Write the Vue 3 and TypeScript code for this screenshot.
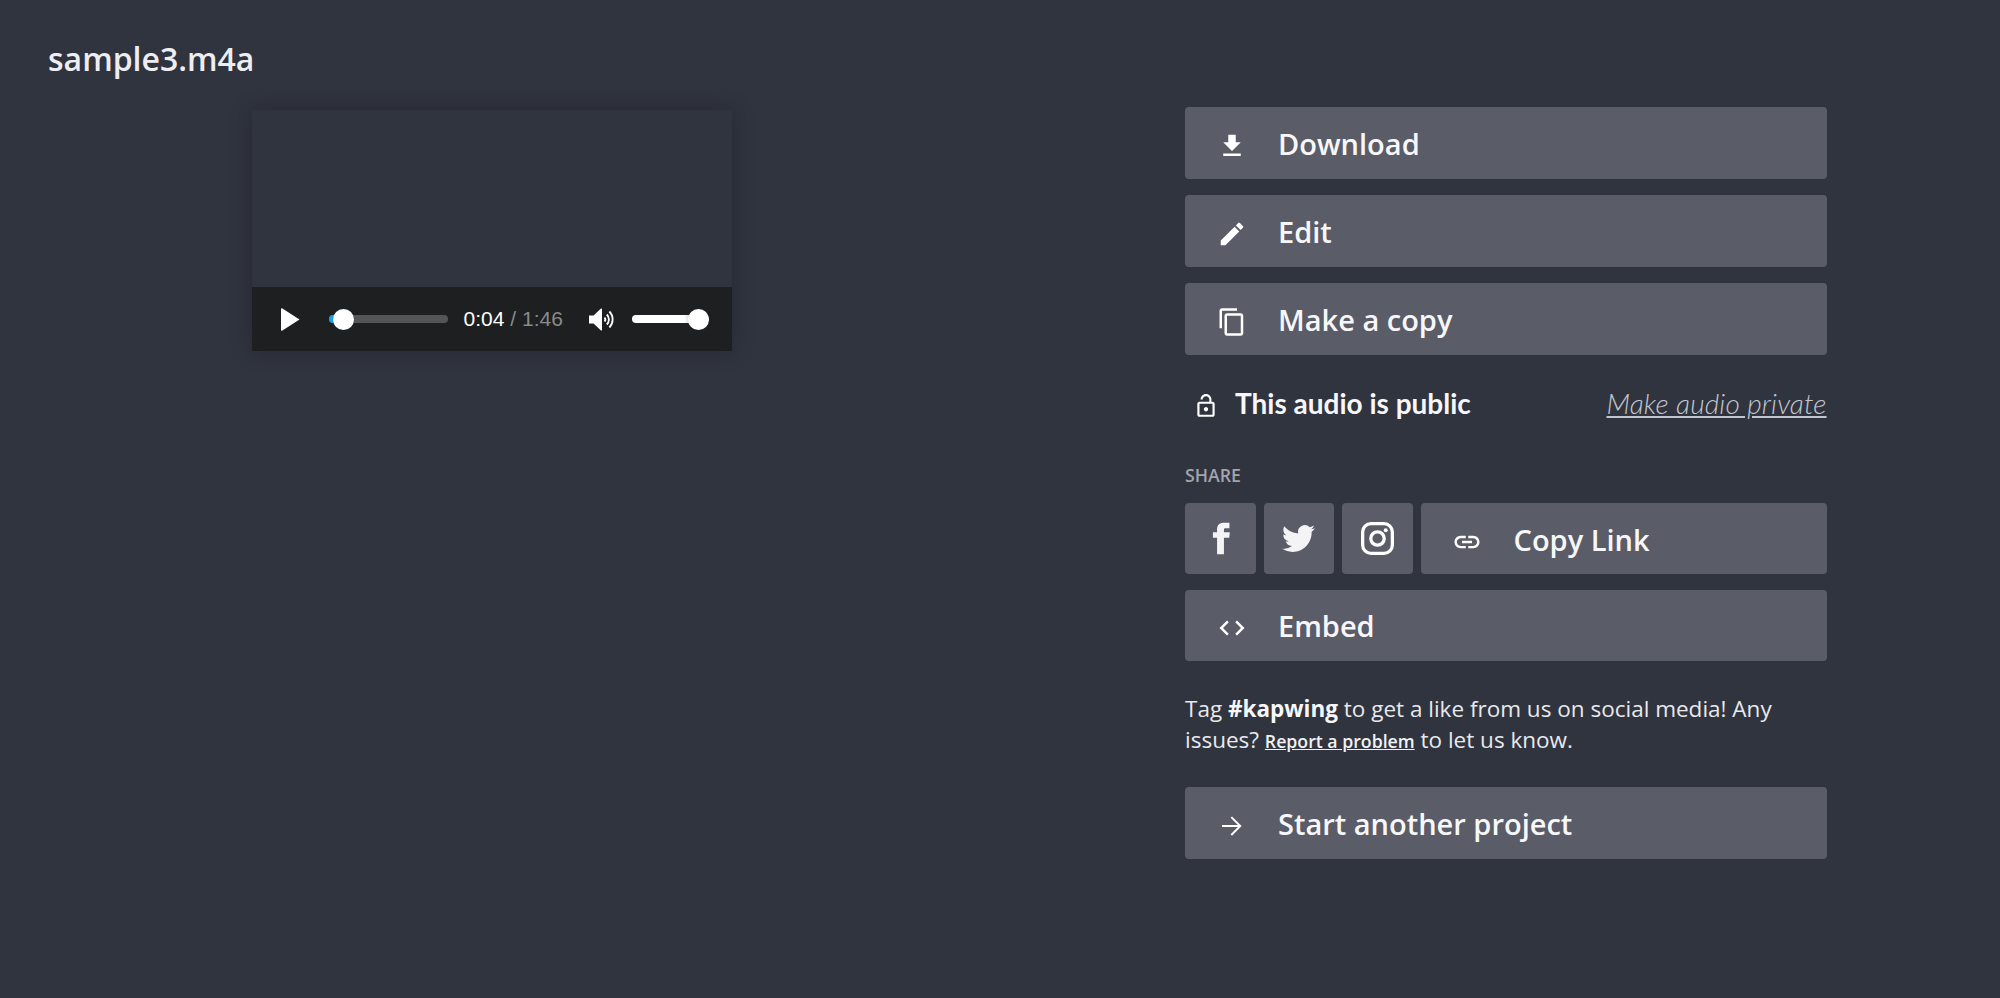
<template>
  <div class="page">
    <section class="left">
      <h1 class="title">sample3.m4a</h1>
      <div class="player">
        <div class="player-screen"></div>
        <div class="controls">
          <svg class="play" viewBox="0 0 20 24"><path d="M0 1.200c0-1 .7-1.400 1.500-.9L19.500 12 1.500 23.700c-.8.5-1.500.1-1.500-.9z" /></svg>
          <div class="timeline">
            <span class="timeline-fill"></span>
            <span class="thumb timeline-thumb"></span>
          </div>
          <div class="time">0:04<span class="time-rest"> / 1:46</span></div>
          <svg class="speaker" viewBox="0 0 26 23">
            <path class="solid" d="M0 7.500h4.500L12 .6c.5-.4 1-.2 1 .5v20.800c0 .7-.5.9-1 .5l-7.500-6.900H0z" />
            <path class="wave" d="M15.500 9.500a3 3 0 010 4M17.800 6.500a7 7 0 010 10M20.400 3.500a11.500 11.500 0 010 16" />
          </svg>
          <div class="volume">
            <span class="thumb volume-thumb"></span>
          </div>
        </div>
      </div>
    </section>

    <section class="right">
      <button v-for="item in topActions" :key="item.label" class="action">
        <span class="action-icon">
          <svg viewBox="0 0 24 24"><path :d="item.icon" /></svg>
        </span>
        {{ item.label }}
      </button>

      <div class="privacy">
        <div class="privacy-state">
          <svg viewBox="0 0 24 24"><path :d="icons.lock" /></svg>
          This audio is public
        </div>
        <a class="privacy-link">Make audio private</a>
      </div>

      <div class="share-label">SHARE</div>
      <div class="share-row">
        <button class="square">
          <svg class="fb" viewBox="0 0 24 24"><path :d="icons.facebook" /></svg>
        </button>
        <button class="square">
          <svg class="tw" viewBox="0 0 24 24"><path :d="icons.twitter" /></svg>
        </button>
        <button class="square">
          <svg class="ig" viewBox="0 0 32 32">
            <rect x="1.600" y="1.600" width="28.800" height="28.800" rx="8" />
            <circle cx="16" cy="16" r="6.500" />
            <circle class="dot" cx="24" cy="8" r="1.900" />
          </svg>
        </button>
        <button class="action copy-link">
          <span class="action-icon">
            <svg viewBox="0 0 24 24"><path :d="icons.link" /></svg>
          </span>
          Copy Link
        </button>
      </div>

      <button class="action embed">
        <span class="action-icon">
          <svg viewBox="0 0 24 24"><path :d="icons.code" /></svg>
        </span>
        Embed
      </button>

      <p class="note">
        Tag <b>#kapwing</b> to get a like from us on social media! Any issues?
        <a class="report">Report a problem</a> to let us know.
      </p>

      <button class="action">
        <span class="action-icon">
          <svg viewBox="0 0 24 24"><path :d="icons.arrow" /></svg>
        </span>
        Start another project
      </button>
    </section>
  </div>
</template>

<script setup lang="ts">
const icons = {
  download: 'M19 9h-4V3H9v6H5l7 7 7-7zM5 18v2h14v-2H5z',
  edit: 'M3 17.25V21h3.75L17.81 9.94l-3.75-3.75L3 17.25zM20.71 7.04c.39-.39.39-1.02 0-1.41l-2.34-2.34c-.39-.39-1.02-.39-1.41 0l-1.83 1.83 3.75 3.75 1.83-1.83z',
  copy: 'M16 1H4c-1.1 0-2 .9-2 2v14h2V3h12V1zm3 4H8c-1.1 0-2 .9-2 2v14c0 1.1.9 2 2 2h11c1.1 0 2-.9 2-2V7c0-1.1-.9-2-2-2zm0 16H8V7h11v14z',
  lock: 'M12 17c1.1 0 2-.9 2-2s-.9-2-2-2-2 .9-2 2 .9 2 2 2zm6-9h-1V6c0-2.76-2.24-5-5-5S7 3.24 7 6h1.900c0-1.710 1.390-3.100 3.100-3.100 1.710 0 3.100 1.390 3.100 3.100v2H6c-1.100 0-2 .9-2 2v10c0 1.100.9 2 2 2h12c1.100 0 2-.9 2-2V10c0-1.100-.9-2-2-2zm0 12H6V10h12v10z',
  link: 'M3.9 12c0-1.71 1.39-3.1 3.1-3.1h4V7H7c-2.76 0-5 2.24-5 5s2.24 5 5 5h4v-1.900H7c-1.710 0-3.100-1.390-3.100-3.100zM8 13h8v-2H8v2zm9-6h-4v1.900h4c1.710 0 3.100 1.390 3.100 3.100s-1.390 3.100-3.100 3.100h-4V17h4c2.760 0 5-2.240 5-5s-2.240-5-5-5z',
  code: 'M9.4 16.6L4.8 12l4.6-4.600L8 6l-6 6 6 6 1.400-1.400zm5.200 0l4.600-4.600-4.600-4.600L16 6l6 6-6 6-1.400-1.400z',
  arrow: 'M12 4.300l-1.100 1.100 5.800 5.800H4v1.600h12.700l-5.800 5.800 1.100 1.100 7.700-7.700z',
  facebook: 'M18.770 7.460H14.500v-1.900c0-.9.6-1.100 1-1.100h3V.5h-4.330C10.240.5 9.500 3.440 9.500 5.320v2.150h-3v4h3v12h5v-12h3.850l.42-4z',
  twitter: 'M23.953 4.570a10 10 0 01-2.825.775 4.958 4.958 0 002.163-2.723c-.951.555-2.005.959-3.127 1.184a4.920 4.920 0 00-8.384 4.482C7.690 8.095 4.067 6.130 1.640 3.162a4.822 4.822 0 00-.666 2.475c0 1.710.870 3.213 2.188 4.096a4.904 4.904 0 01-2.228-.616v.06a4.923 4.923 0 003.946 4.827 4.996 4.996 0 01-2.212.085 4.936 4.936 0 004.604 3.417 9.867 9.867 0 01-6.102 2.105c-.390 0-.779-.023-1.170-.067a13.995 13.995 0 007.557 2.209c9.053 0 13.998-7.496 13.998-13.985 0-.21 0-.42-.015-.63A9.935 9.935 0 0024 4.590z',
}

const topActions = [
  { label: 'Download', icon: icons.download },
  { label: 'Edit', icon: icons.edit },
  { label: 'Make a copy', icon: icons.copy },
]
</script>

<style>
html,
body {
  margin: 0;
  background: #30343f;
}
</style>

<style scoped>
.page {
  display: flex;
  min-height: 998px;
  background: #30343f;
  color: #f7f7f9;
  font-family: "Open Sans", "Noto Sans", sans-serif;
}

.left {
  width: 1137px;
  padding: 40px 0 0 48px;
}

.title {
  margin: 0 0 31px;
  font-size: 32px;
  line-height: 38px;
  font-weight: 600;
  color: #eeeef1;
}

.player {
  width: 480.800px;
  margin-left: 203.600px;
  margin-top: 32px;
  box-shadow: 0 0 18px rgba(24, 25, 32, 0.4);
}

.player-screen {
  height: 177px;
}

.controls {
  display: flex;
  align-items: center;
  height: 64px;
  padding-left: 29px;
  background: #1e1f21;
}

.play {
  width: 19px;
  height: 23px;
  fill: #fff;
  flex: none;
}

.timeline {
  position: relative;
  width: 119px;
  height: 8px;
  margin-left: 29px;
  border-radius: 4px;
  background: #555;
  flex: none;
}

.timeline-fill {
  position: absolute;
  left: 0;
  top: 0;
  width: 10px;
  height: 8px;
  border-radius: 4px 0 0 4px;
  background: #1a9fe0;
}

.thumb {
  position: absolute;
  top: -6.500px;
  width: 21px;
  height: 21px;
  border-radius: 50%;
  background: #fff;
}

.timeline-thumb {
  left: 4.400px;
}

.time {
  margin-left: 16px;
  width: 125px;
  font-family: "Liberation Sans", Arial, sans-serif;
  font-size: 21px;
  color: #fff;
  white-space: nowrap;
  flex: none;
}

.time-rest {
  color: #8a8a8a;
}

.speaker {
  width: 26px;
  height: 23px;
  flex: none;
}

.speaker .solid {
  fill: #fff;
}

.speaker .wave {
  fill: none;
  stroke: #fff;
  stroke-width: 1.800;
}

.volume {
  position: relative;
  width: 77.400px;
  height: 8px;
  margin-left: 17.400px;
  border-radius: 4px;
  background: linear-gradient(90deg, #fff 68%, #c9c9c9 78%);
  flex: none;
}

.volume-thumb {
  right: 0;
}

.right {
  display: flex;
  flex-direction: column;
  width: 641.600px;
  padding-top: 107px;
}

button {
  border: 0;
  color: inherit;
  font-family: inherit;
}

.action {
  display: flex;
  align-items: center;
  width: 100%;
  height: 72px;
  margin-bottom: 16px;
  padding: 1px 0 0;
  border-radius: 4px;
  background: #5a5c68;
  font-size: 29px;
  font-weight: 600;
  text-align: left;
}

.action-icon {
  display: flex;
  justify-content: center;
  width: 93px;
  flex: none;
}

.action-icon svg {
  width: 30px;
  height: 30px;
  margin-top: 5px;
  fill: #fff;
}

.privacy {
  display: flex;
  align-items: center;
  justify-content: space-between;
  height: 32px;
  margin-top: 16px;
}

.privacy-state {
  display: flex;
  align-items: center;
  gap: 16px;
  padding-left: 8px;
  font-family: Lato, sans-serif;
  font-size: 28px;
  font-weight: 700;
}

.privacy-state svg {
  width: 26px;
  height: 26px;
  margin-top: 5px;
  fill: #fff;
}

.privacy-link {
  font-family: Lato, sans-serif;
  font-size: 28px;
  font-weight: 300;
  font-style: italic;
  letter-spacing: 0.15px;
  text-decoration: underline;
  color: #c4c5cc;
}

.share-label {
  margin-top: 44px;
  font-size: 17.700px;
  line-height: 24px;
  font-weight: 600;
  color: #a3a4ac;
}

.share-row {
  display: flex;
  gap: 8px;
  margin-top: 16px;
  margin-bottom: 16px;
}

.square {
  display: flex;
  align-items: center;
  justify-content: center;
  width: 70.500px;
  height: 71px;
  padding: 0;
  border-radius: 4px;
  background: #5a5c68;
  flex: none;
}

.square .fb {
  width: 33px;
  height: 33px;
  fill: #f4f4f6;
}

.square .tw {
  width: 33px;
  height: 33px;
  fill: #f4f4f6;
}

.square .ig {
  width: 33px;
  height: 33px;
  fill: none;
  stroke: #fff;
  stroke-width: 3.200;
}

.square .ig .dot {
  fill: #fff;
  stroke: none;
}

.copy-link {
  flex: 1;
  width: auto;
  height: 71px;
  margin: 0;
}

.embed {
  height: 70.500px;
}

.note {
  margin: 16.500px 0 30px;
  font-size: 22.500px;
  line-height: 31px;
  color: #e9e9ec;
}

.note b {
  font-weight: 700;
  color: #f7f7f9;
}

.report {
  font-size: 17.700px;
  font-weight: 600;
  text-decoration: underline;
  color: #f1f1f3;
}
</style>
